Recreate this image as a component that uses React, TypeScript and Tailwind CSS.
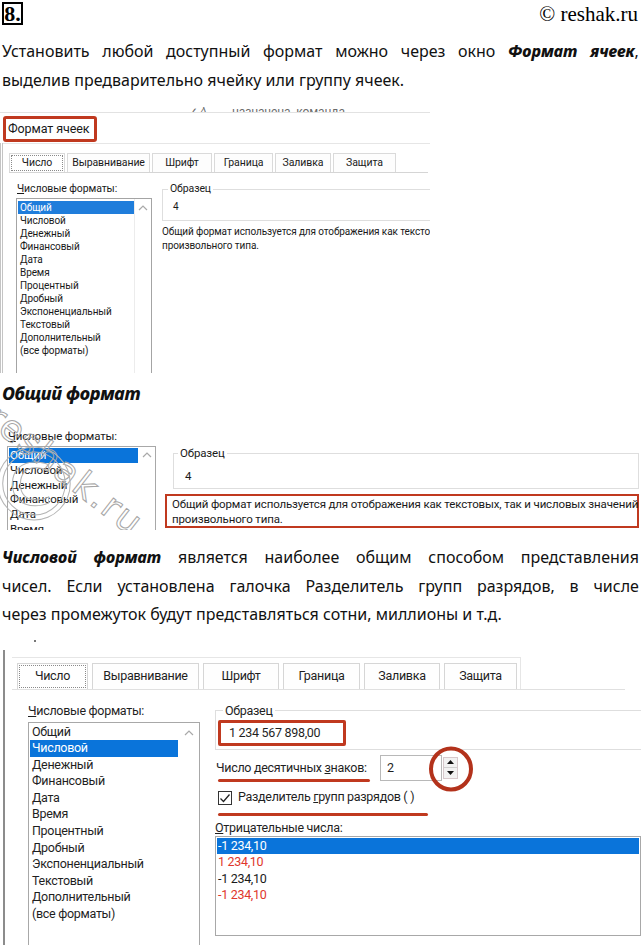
import React from "react";

const UI = "font-['Roboto','Noto_Sans',sans-serif]";
const TXT = "font-['Noto_Sans','DejaVu_Sans',sans-serif]";
const SERIF = "font-['Liberation_Serif','Times_New_Roman',serif]";

const FORMATS = [
  "Общий",
  "Числовой",
  "Денежный",
  "Финансовый",
  "Дата",
  "Время",
  "Процентный",
  "Дробный",
  "Экспоненциальный",
  "Текстовый",
  "Дополнительный",
  "(все форматы)",
];

function ChevUp() {
  return (
    <svg width="10" height="7" viewBox="0 0 10 7">
      <path d="M1 6 L5 2 L9 6" fill="none" stroke="#a9a9a9" strokeWidth="1.2" />
    </svg>
  );
}

function JLine({ words }: { words: React.ReactNode[] }) {
  return (
    <div className="flex justify-between whitespace-nowrap">
      {words.map((w, i) => (
        <span key={i}>{w}</span>
      ))}
    </div>
  );
}

const B = ({ children }: { children: React.ReactNode }) => (
  <b className="font-extrabold italic">{children}</b>
);

function Header() {
  return (
    <div className={`h-[37px] flex justify-between items-start pl-[2px] pt-[2px] ${SERIF}`}>
      <div className="w-[21px] h-[23px] border-2 border-black text-[22px] leading-[19px] font-bold text-center">
        8.
      </div>
      <div className="text-[21px] leading-[24px] pr-[3px]">© reshak.ru</div>
    </div>
  );
}

function Para1() {
  return (
    <div className={`px-[2px] text-[16px] leading-[29px] text-[#111] ${TXT}`}>
      <JLine
        words={[
          "Установить",
          "любой",
          "доступный",
          "формат",
          "можно",
          "через",
          "окно",
          <B>Формат</B>,
          <>
            <B>ячеек</B>,
          </>,
        ]}
      />
      <div>выделив предварительно ячейку или группу ячеек.</div>
    </div>
  );
}

function Shot1() {
  const tabs: [string, string][] = [
    ["Число", "w-[56px]"],
    ["Выравнивание", "w-[83px]"],
    ["Шрифт", "w-[60px]"],
    ["Граница", "w-[59px]"],
    ["Заливка", "w-[56px]"],
    ["Защита", "w-[63px]"],
  ];
  return (
    <div className={`mt-[8px] w-[430px] h-[270px] overflow-hidden text-[#1a1a1a] tracking-[-0.1px] ${UI}`}>
      <div className="h-[10px] overflow-hidden border-b border-[#e2e2e2] flex items-end pl-[188px] text-[12px] leading-[12px] text-[#6b6b6b]">
        <span className="translate-y-[6px] w-[44px]">✓ ∕\</span>
        <span className="translate-y-[6px]">назначена&nbsp;&nbsp;команда</span>
      </div>
      <div className="h-[30px] pl-[3px] pt-[3px]">
        <div className="w-[94px] h-[26px] border-[3px] border-[#c0391f] rounded-[3px] text-[12.5px] leading-[19px] pl-[2px]">
          Формат ячеек
        </div>
      </div>
      <div className="h-[230px] border-l-[3px] border-double border-[#c4c4c4]">
        <div className="h-px bg-[#e6e6e6]" />
        <div className="pt-[9px] pl-[6px]">
          <div className="w-[419px] flex gap-[2px] border-b border-[#d5d5d5] h-[20px]">
            {tabs.map(([t, w], i) => (
              <div
                key={t}
                className={`${w} border border-b-0 border-[#dadada] flex items-center justify-center text-[10.5px] ${
                  i === 0 ? "bg-white p-[1px]" : "bg-[#fdfdfd]"
                }`}
              >
                {i === 0 ? (
                  <div className="w-full h-full border border-dotted border-[#8a8a8a] flex items-center justify-center">
                    {t}
                  </div>
                ) : (
                  t
                )}
              </div>
            ))}
          </div>
        </div>
        <div className="flex pl-[13px] pt-[9px]">
          <div className="w-[136px] flex-none">
            <div className="text-[10.5px] leading-[13px] pl-[1px]">
              <span className="underline">Ч</span>исловые форматы:
            </div>
            <div className="mt-[3px] h-[190px] border border-[#a4a4a4] flex">
              <div className="w-[117px] pt-[2px] pl-[1px]">
                {FORMATS.map((f) => (
                  <div
                    key={f}
                    className={`h-[13px] leading-[13px] text-[10px] pl-[2px] whitespace-nowrap ${
                      f === "Общий" ? "bg-[#1f7ddb] text-white" : ""
                    }`}
                  >
                    {f}
                  </div>
                ))}
              </div>
              <div className="flex-1 border-l border-[#ececec] flex justify-center pt-[5px]">
                <ChevUp />
              </div>
            </div>
          </div>
          <div className="ml-[10px] w-[320px] flex-none">
            <fieldset className="border border-[#dedede] pb-[3px] h-[39px]">
              <legend className="ml-[5px] px-[2px] text-[10.5px] leading-[14px]">Образец</legend>
              <div className="pl-[10px] text-[10px] leading-[14px] mt-[4px]">4</div>
            </fieldset>
            <div className="mt-[4px] text-[10px] leading-[14px] whitespace-nowrap">
              Общий формат используется для отображения как текстовых, так и числовых
              <br />
              произвольного типа.
            </div>
          </div>
        </div>
      </div>
    </div>
  );
}

function Shot2() {
  const items = ["Общий", "Числовой", "Денежный", "Финансовый", "Дата", "Время"];
  return (
    <div className={`relative h-[124px] overflow-hidden text-[#1a1a1a] tracking-[-0.15px] ${UI}`}>
      <div className="flex pt-[23px]">
        <div className="w-[156px] flex-none pl-[7px]">
          <div className="text-[11.5px] leading-[15px] pl-[1px]">
            <span className="underline">Ч</span>исловые форматы:
          </div>
          <div className="mt-[2px] h-[100px] border border-[#a8a8a8] flex">
            <div className="w-[130px] pt-[1px] pl-[1px]">
              {items.map((f) => (
                <div
                  key={f}
                  className={`h-[14.8px] leading-[14.8px] text-[11.5px] pl-[1px] ${
                    f === "Общий" ? "bg-[#0a74da] text-white" : ""
                  }`}
                >
                  {f}
                </div>
              ))}
            </div>
            <div className="flex-1 flex justify-center pt-[4px]">
              <ChevUp />
            </div>
          </div>
        </div>
        <div className="ml-[9px] w-[474px] flex-none pt-[17px]">
          <fieldset className="ml-[8px] border border-[#dedede] pb-[4px]">
            <legend className="ml-[4px] px-[2px] text-[11.5px] leading-[15px]">Образец</legend>
            <div className="pl-[11px] mt-[8px] text-[11.5px] leading-[15px]">4</div>
          </fieldset>
          <div className="mt-[5px] h-[34px] border-2 border-[#c0391f] pl-[5px] pt-[1px] text-[11.5px] leading-[14.5px] whitespace-nowrap">
            Общий формат используется для отображения как текстовых, так и числовых значений
            <br />
            произвольного типа.
          </div>
        </div>
      </div>
      <div className="absolute left-[2px] top-[-8px] rotate-[38deg] origin-top-left text-[36px] leading-[36px] font-['DejaVu_Sans',sans-serif] text-transparent [-webkit-text-stroke:1px_#a5a5a5] tracking-[2px]">
        reshak.ru
      </div>
      <div className="absolute left-[-16px] top-[30px] text-[100px] leading-[100px] font-['DejaVu_Sans',sans-serif] text-transparent [-webkit-text-stroke:1px_#b5b5b5]">
        ©
      </div>
    </div>
  );
}

function Para2() {
  return (
    <div className={`mt-[13px] px-[2px] text-[16px] leading-[28.5px] text-[#111] ${TXT}`}>
      <JLine
        words={[
          <B>Числовой</B>,
          <B>формат</B>,
          "является",
          "наиболее",
          "общим",
          "способом",
          "представления",
        ]}
      />
      <JLine
        words={[
          "чисел.",
          "Если",
          "установлена",
          "галочка",
          "Разделитель",
          "групп",
          "разрядов,",
          "в",
          "числе",
        ]}
      />
      <div>через промежуток будут представляться сотни, миллионы и т.д.</div>
    </div>
  );
}

function Shot3() {
  const tabs: [string, string][] = [
    ["Число", "w-[71px]"],
    ["Выравнивание", "w-[107px]"],
    ["Шрифт", "w-[76px]"],
    ["Граница", "w-[77px]"],
    ["Заливка", "w-[76px]"],
    ["Защита", "w-[73px]"],
  ];
  const neg: [string, string][] = [
    ["-1 234,10", "bg-[#0a74da] text-white"],
    ["1 234,10", "text-[#e0362c]"],
    ["-1 234,10", "text-[#1a1a1a]"],
    ["-1 234,10", "text-[#e0362c]"],
  ];
  return (
    <div className={`h-[317px] overflow-hidden text-[#1f1f1f] tracking-[-0.3px] ${UI}`}>
      <div className="h-[21px] pl-[34px] pt-[11px]">
        <div className="w-[2px] h-[2px] bg-[#777]" />
      </div>
      <div className="h-[296px] ml-[3px] border-l-[2px] border-[#8c8c8c]">
        <div className="pt-[7px] pl-[7px]">
          <div className="w-[613px] border-b border-[#e0e0e0]">
            <div className="w-[509px] h-[32px] border-t border-r border-[#e6e6e6] flex items-end gap-[4px] pl-[5px]">
              {tabs.map(([t, w], i) => (
                <div
                  key={t}
                  className={`${w} h-[26px] border border-b-0 border-[#d6d6d6] flex items-center justify-center text-[12.5px] ${
                    i === 0 ? "bg-white p-[1px] border-b" : "bg-[#fefefe]"
                  }`}
                >
                  {i === 0 ? (
                    <div className="w-full h-full border border-dotted border-[#8a8a8a] flex items-center justify-center">
                      {t}
                    </div>
                  ) : (
                    t
                  )}
                </div>
              ))}
            </div>
          </div>
        </div>
        <div className="flex pl-[23px] pt-[12px]">
          <div className="w-[172px] flex-none">
            <div className="text-[12.5px] leading-[17px]">
              <span className="underline">Ч</span>исловые форматы:
            </div>
            <div className="mt-[3px] h-[240px] border border-[#a8a8a8] flex">
              <div className="w-[149px] pt-[1px] pl-[1px]">
                {FORMATS.map((f) => (
                  <div
                    key={f}
                    className={`h-[16.6px] leading-[16.6px] text-[12.5px] pl-[2px] whitespace-nowrap ${
                      f === "Числовой" ? "bg-[#0a74da] text-white" : ""
                    }`}
                  >
                    {f}
                  </div>
                ))}
              </div>
              <div className="flex-1 flex justify-center pt-[6px]">
                <ChevUp />
              </div>
            </div>
          </div>
          <div className="ml-[15px] w-[430px] flex-none">
            <fieldset className="border border-[#dedede] pb-[3px]">
              <legend className="ml-[7px] px-[2px] text-[12.5px] leading-[17px]">Образец</legend>
              <div className="ml-[2px] mt-[1px] w-[128px] h-[26px] border-[3px] border-[#c0391f] rounded-[2px] text-[12.5px] leading-[20px] pl-[8px] whitespace-nowrap">
                1 234 567 898,00
              </div>
            </fieldset>
            <div className="mt-[5px] h-[26px] flex items-center">
              <div className="relative w-[165px] h-[26px] leading-[26px] text-[12.5px] pl-[1px] whitespace-nowrap">
                Число десятичных <span className="underline">з</span>наков:
                <div className="absolute left-[3px] top-[24px] w-[152px] h-[3px] rounded-full bg-[#c0391f]" />
              </div>
              <div className="w-[62px] h-[26px] border border-[#b8b8b8] text-[12.5px] leading-[24px] pl-[6px]">
                2
              </div>
              <div className="relative ml-[1px] w-[15px] h-[22px] flex flex-col border border-[#d7c9cc] bg-[#f2f2f2]">
                <div className="flex-1 flex items-center justify-center border-b border-[#cfcfcf]">
                  <svg width="7" height="4" viewBox="0 0 7 4">
                    <path d="M0 4 L3.5 0 L7 4 Z" fill="#111" />
                  </svg>
                </div>
                <div className="flex-1 flex items-center justify-center">
                  <svg width="7" height="4" viewBox="0 0 7 4">
                    <path d="M0 0 L3.5 4 L7 0 Z" fill="#111" />
                  </svg>
                </div>
                <svg
                  className="absolute left-[-16px] top-[-12px]"
                  width="46"
                  height="46"
                  viewBox="0 0 46 46"
                >
                  <ellipse cx="23" cy="23" rx="20" ry="20.5" fill="none" stroke="#b3321b" strokeWidth="4" />
                </svg>
              </div>
            </div>
            <div className="relative mt-[6px] h-[22px] flex items-center">
              <div className="ml-[3px] w-[14px] h-[14px] border border-[#333] flex items-center justify-center">
                <svg width="12" height="12" viewBox="0 0 12 12">
                  <path d="M1.5 6.5 L4.5 9.5 L10.5 2.5" fill="none" stroke="#222" strokeWidth="1.3" />
                </svg>
              </div>
              <div className="ml-[6px] text-[12.5px] whitespace-nowrap">
                Разделитель <span className="underline">г</span>рупп разрядов ( )
              </div>
              <div className="absolute left-[3px] top-[26px] w-[210px] h-[3px] rounded-full bg-[#c0391f]" />
            </div>
            <div className="mt-[10px] text-[12.5px] leading-[17px]">
              <span className="underline">О</span>трицательные числа:
            </div>
            <div className="h-[100px] w-[426px] border border-[#a8a8a8] p-[1px]">
              {neg.map(([v, c], i) => (
                <div key={i} className={`h-[16.6px] leading-[16.6px] text-[12.5px] pl-[1px] ${c}`}>
                  {v}
                </div>
              ))}
            </div>
          </div>
        </div>
      </div>
    </div>
  );
}

export default function App() {
  return (
    <div className="w-[641px] h-[945px] overflow-hidden bg-white text-black">
      <Header />
      <Para1 />
      <Shot1 />
      <h2 className={`mt-[7px] pl-[2px] text-[18px] leading-[26px] font-extrabold italic text-[#111] tracking-[-0.3px] ${TXT}`}>
        Общий формат
      </h2>
      <Shot2 />
      <Para2 />
      <Shot3 />
    </div>
  );
}
